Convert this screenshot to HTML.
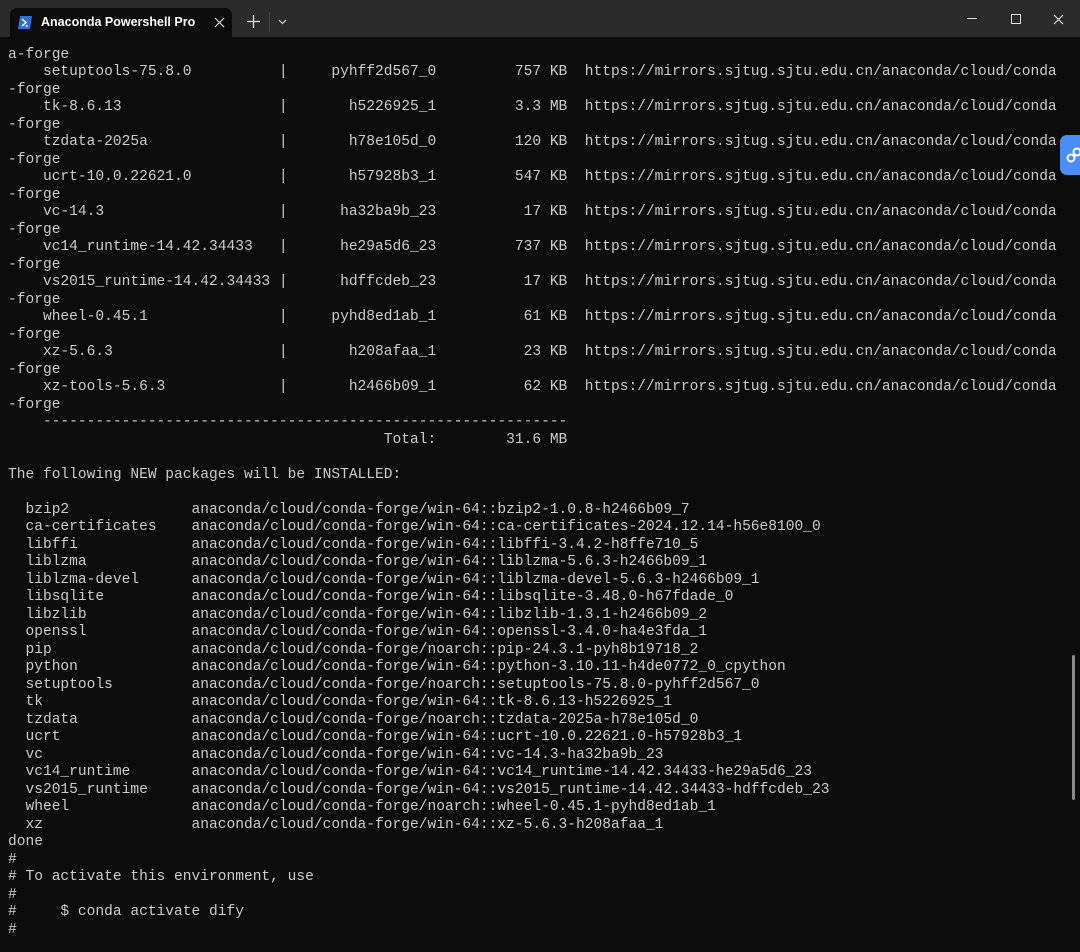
<!DOCTYPE html>
<html><head><meta charset="utf-8"><style>
html,body{margin:0;padding:0;width:1080px;height:952px;overflow:hidden;background:#0c0c0c}
#bar{position:absolute;left:0;top:0;width:1080px;height:37px;background:#2b2b2b}
#tab{position:absolute;left:10px;top:8px;width:222px;height:29px;background:#0c0c0c;border-radius:7px 7px 0 0}
#tab .t{position:absolute;left:31px;top:7px;font:600 12.5px "Liberation Sans",sans-serif;color:#fff;white-space:nowrap;width:154px;overflow:hidden}
#term{position:absolute;left:8px;top:46.5px;font-family:"Liberation Mono",monospace;font-size:14.57px;line-height:17.5px;color:#cccccc;white-space:pre;margin:0}
</style></head><body>
<div id="bar">
<div id="tab">
<svg style="position:absolute;left:8px;top:8px" width="14" height="13" viewBox="0 0 14 13"><path d="M2 0H14L12 13H0Z" fill="#2f6fd6"/><path d="M4 3L8 6.5L4 10" stroke="#fff" stroke-width="1.4" fill="none"/><path d="M7.5 10H10" stroke="#fff" stroke-width="1.2"/></svg>
<div class="t">Anaconda Powershell Prompt</div>
<svg style="position:absolute;left:204px;top:9px" width="11" height="11"><path d="M1 1L10 10M10 1L1 10" stroke="#ddd" stroke-width="1.2"/></svg>
</div>
<svg style="position:absolute;left:247px;top:15px" width="13" height="13"><path d="M6.5 0V13M0 6.5H13" stroke="#ddd" stroke-width="1.3"/></svg>
<div style="position:absolute;left:269px;top:12px;width:1px;height:20px;background:#444"></div>
<svg style="position:absolute;left:278px;top:19px" width="9" height="6"><path d="M1 1L4.5 4.5L8 1" stroke="#ddd" stroke-width="1.2" fill="none"/></svg>
<div style="position:absolute;left:967px;top:18px;width:10px;height:1px;background:#ddd"></div>
<div style="position:absolute;left:1011px;top:14px;width:8px;height:8px;border:1px solid #ddd"></div>
<svg style="position:absolute;left:1053px;top:14px" width="11" height="11"><path d="M1 1L10 10M10 1L1 10" stroke="#ddd" stroke-width="1.2"/></svg>
</div>
<div style="position:absolute;left:1060px;top:135px;width:24px;height:40px;background:#4a8df6;border-radius:7px 0 0 7px"></div>
<svg style="position:absolute;left:1066px;top:145px" width="14" height="20"><circle cx="5" cy="13" r="3.5" stroke="#fff" stroke-width="2" fill="none"/><circle cx="11" cy="7" r="3.5" stroke="#fff" stroke-width="2" fill="none"/></svg>
<div style="position:absolute;left:1072px;top:655px;width:3px;height:145px;background:#8a8a8a;border-radius:2px"></div>
<pre id="term">a-forge
    setuptools-75.8.0          |     pyhff2d567_0         757 KB  https://mirrors.sjtug.sjtu.edu.cn/anaconda/cloud/conda
-forge
    tk-8.6.13                  |       h5226925_1         3.3 MB  https://mirrors.sjtug.sjtu.edu.cn/anaconda/cloud/conda
-forge
    tzdata-2025a               |       h78e105d_0         120 KB  https://mirrors.sjtug.sjtu.edu.cn/anaconda/cloud/conda
-forge
    ucrt-10.0.22621.0          |       h57928b3_1         547 KB  https://mirrors.sjtug.sjtu.edu.cn/anaconda/cloud/conda
-forge
    vc-14.3                    |      ha32ba9b_23          17 KB  https://mirrors.sjtug.sjtu.edu.cn/anaconda/cloud/conda
-forge
    vc14_runtime-14.42.34433   |      he29a5d6_23         737 KB  https://mirrors.sjtug.sjtu.edu.cn/anaconda/cloud/conda
-forge
    vs2015_runtime-14.42.34433 |      hdffcdeb_23          17 KB  https://mirrors.sjtug.sjtu.edu.cn/anaconda/cloud/conda
-forge
    wheel-0.45.1               |     pyhd8ed1ab_1          61 KB  https://mirrors.sjtug.sjtu.edu.cn/anaconda/cloud/conda
-forge
    xz-5.6.3                   |       h208afaa_1          23 KB  https://mirrors.sjtug.sjtu.edu.cn/anaconda/cloud/conda
-forge
    xz-tools-5.6.3             |       h2466b09_1          62 KB  https://mirrors.sjtug.sjtu.edu.cn/anaconda/cloud/conda
-forge
    ------------------------------------------------------------
                                           Total:        31.6 MB

The following NEW packages will be INSTALLED:

  bzip2              anaconda/cloud/conda-forge/win-64::bzip2-1.0.8-h2466b09_7
  ca-certificates    anaconda/cloud/conda-forge/win-64::ca-certificates-2024.12.14-h56e8100_0
  libffi             anaconda/cloud/conda-forge/win-64::libffi-3.4.2-h8ffe710_5
  liblzma            anaconda/cloud/conda-forge/win-64::liblzma-5.6.3-h2466b09_1
  liblzma-devel      anaconda/cloud/conda-forge/win-64::liblzma-devel-5.6.3-h2466b09_1
  libsqlite          anaconda/cloud/conda-forge/win-64::libsqlite-3.48.0-h67fdade_0
  libzlib            anaconda/cloud/conda-forge/win-64::libzlib-1.3.1-h2466b09_2
  openssl            anaconda/cloud/conda-forge/win-64::openssl-3.4.0-ha4e3fda_1
  pip                anaconda/cloud/conda-forge/noarch::pip-24.3.1-pyh8b19718_2
  python             anaconda/cloud/conda-forge/win-64::python-3.10.11-h4de0772_0_cpython
  setuptools         anaconda/cloud/conda-forge/noarch::setuptools-75.8.0-pyhff2d567_0
  tk                 anaconda/cloud/conda-forge/win-64::tk-8.6.13-h5226925_1
  tzdata             anaconda/cloud/conda-forge/noarch::tzdata-2025a-h78e105d_0
  ucrt               anaconda/cloud/conda-forge/win-64::ucrt-10.0.22621.0-h57928b3_1
  vc                 anaconda/cloud/conda-forge/win-64::vc-14.3-ha32ba9b_23
  vc14_runtime       anaconda/cloud/conda-forge/win-64::vc14_runtime-14.42.34433-he29a5d6_23
  vs2015_runtime     anaconda/cloud/conda-forge/win-64::vs2015_runtime-14.42.34433-hdffcdeb_23
  wheel              anaconda/cloud/conda-forge/noarch::wheel-0.45.1-pyhd8ed1ab_1
  xz                 anaconda/cloud/conda-forge/win-64::xz-5.6.3-h208afaa_1
done
#
# To activate this environment, use
#
#     $ conda activate dify
#</pre>
</body></html>
